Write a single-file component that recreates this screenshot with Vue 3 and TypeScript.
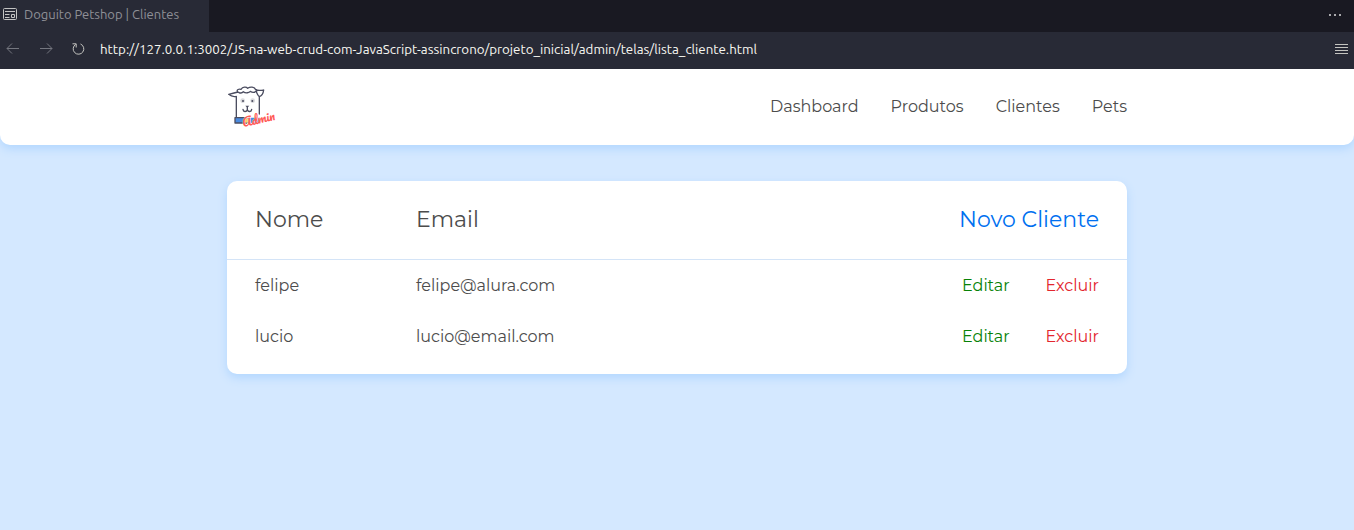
<script setup lang="ts">
import { ref } from 'vue'

interface Cliente {
  nome: string
  email: string
}

const endereco = ref(
  'http://127.0.0.1:3002/JS-na-web-crud-com-JavaScript-assincrono/projeto_inicial/admin/telas/lista_cliente.html'
)
const menu: string[] = ['Dashboard', 'Produtos', 'Clientes', 'Pets']
const clientes = ref<Cliente[]>([
  { nome: 'felipe', email: 'felipe@alura.com' },
  { nome: 'lucio', email: 'lucio@email.com' }
])

function excluir(cliente: Cliente): void {
  clientes.value = clientes.value.filter((c) => c !== cliente)
}
</script>

<template>
  <div class="window">
    <div class="tabs">
      <div class="tab">
        <svg class="tab-icon" viewBox="0 0 14 12" width="14" height="12" aria-hidden="true">
          <rect x="0.5" y="0.5" width="13" height="11" rx="1" />
          <path d="M2 3.5h10M2 6.5h4.500M2 9.500h4.500M8.500 6.500h3v3h-3z" />
        </svg>
        <span>Doguito Petshop | Clientes</span>
      </div>
      <button class="icon-button more" type="button" aria-label="Mais ações">
        <svg viewBox="0 0 12 2" width="12" height="2"><path d="M0 0h2v2H0zM5 0h2v2H5zM10 0h2v2h-2z" /></svg>
      </button>
    </div>
    <div class="toolbar">
      <button class="icon-button dim" type="button" aria-label="Voltar">
        <svg viewBox="0 0 14 12" width="14" height="12"><path d="M13 5.500H1M6 0.500L1 5.500l5 5" /></svg>
      </button>
      <button class="icon-button dim" type="button" aria-label="Avançar">
        <svg viewBox="0 0 14 12" width="14" height="12"><path d="M1 5.500h12M8 0.500l5 5-5 5" /></svg>
      </button>
      <button class="icon-button" type="button" aria-label="Recarregar">
        <svg viewBox="0 0 14 12" width="14" height="12"><path d="M0.500 0.800h3.700v3.700M3.700 1.400A5.300 5.300 0 1 0 8.500 1" /></svg>
      </button>
      <input v-model="endereco" class="address" type="text" aria-label="Endereço" spellcheck="false" />
      <button class="icon-button" type="button" aria-label="Menu">
        <svg viewBox="0 0 13 10" width="13" height="10"><path d="M0 0.500h13M0 3.500h13M0 6.500h13M0 9.500h13" /></svg>
      </button>
    </div>

    <div class="page">
      <header class="header">
        <div class="container header-inner">
          <a class="logo" href="#" aria-label="Doguito Admin">
            <svg viewBox="21 21 150 132" width="50" height="44">
              <path class="collar" d="M45 119h74v16H45z" />
              <path class="face" d="M49 56L50 118h68V48L108 36H58L49 43z" />
              <path
                class="line"
                d="M49 55v63M118 56v52M54 42C44 45 35 47 26 49C32 54 40 57 49 55M52 41C50 35 56 32 63 34C68 26 79 26 83 31C91 25 103 27 106 34C111 34 113 38 109 41M56 43C61 46 67 45 70 41C77 47 88 44 91 40C97 44 104 43 108 40M108 36C116 38 123 37 131 36C130 45 126 53 118 56C113 52 111 46 109 41M45 119h34M45 119v16h35"
              />
              <path class="tag" d="M72 121h14v13H72z" />
              <circle class="eye" cx="68" cy="68" r="7" />
              <circle class="eye" cx="98" cy="68" r="7" />
              <circle class="dark" cx="69" cy="69" r="3" />
              <circle class="dark" cx="97" cy="69" r="3" />
              <path class="dark" d="M76 83h12l-6 6z" />
              <path class="line" d="M82 88v7M69 94C70 102 79 103 82 95C85 103 94 102 95 94" />
              <text class="admin" x="70" y="148" transform="rotate(-13 70 148)">Admin</text>
            </svg>
          </a>
          <nav class="menu">
            <a v-for="item in menu" :key="item" href="#">{{ item }}</a>
          </nav>
        </div>
      </header>

      <main class="container">
        <section class="card">
          <table>
            <colgroup>
              <col class="col-nome" />
              <col />
              <col class="col-acoes" />
            </colgroup>
            <thead>
              <tr>
                <th scope="col">Nome</th>
                <th scope="col">Email</th>
                <th scope="col" class="right"><a class="novo" href="#">Novo Cliente</a></th>
              </tr>
            </thead>
            <tbody>
              <tr v-for="cliente in clientes" :key="cliente.email">
                <td>{{ cliente.nome }}</td>
                <td>{{ cliente.email }}</td>
                <td>
                  <div class="acoes">
                    <a class="editar" href="#">Editar</a>
                    <button class="excluir" type="button" @click="excluir(cliente)">Excluir</button>
                  </div>
                </td>
              </tr>
            </tbody>
          </table>
        </section>
      </main>
    </div>
  </div>
</template>

<style>
body {
  margin: 0;
  background: #d4e8ff;
}
</style>

<style scoped>
.window {
  display: flex;
  flex-direction: column;
  min-height: 100vh;
}

.tabs {
  display: flex;
  justify-content: space-between;
  height: 32px;
  background: #191922;
}

.tab {
  display: flex;
  align-items: center;
  gap: 7px;
  box-sizing: border-box;
  padding: 0 30px 4px 3px;
  background: #282a36;
  color: #8f9096;
  font: 13px/18px Ubuntu, "Noto Sans", sans-serif;
}

.tab-icon {
  fill: none;
  stroke: #c4c4c4;
}

.icon-button {
  display: flex;
  align-items: center;
  padding: 0;
  border: 0;
  background: none;
  cursor: pointer;
}

.icon-button svg {
  fill: none;
  stroke: #c4c4c0;
}

.icon-button.dim svg {
  stroke: #74767f;
}

.icon-button.more {
  padding: 0 13px 2px 0;
}

.icon-button.more svg {
  fill: #a9a9ad;
  stroke: none;
}

.toolbar {
  display: flex;
  align-items: center;
  gap: 19px;
  box-sizing: border-box;
  height: 37px;
  padding: 0 6px 3px;
  background: #282a36;
}

.address {
  flex: 1;
  min-width: 0;
  margin-left: -5px;
  padding: 0;
  border: 0;
  outline: 0;
  background: none;
  color: #f8f8f2;
  font-family: Ubuntu, "Noto Sans", sans-serif;
}

.page {
  flex: 1;
  overflow: hidden;
  background: #d4e8ff;
  color: #4c4c4c;
  font: 400 16px/20px Montserrat, Inter, sans-serif;
}

.container {
  width: 100%;
  max-width: 900px;
  margin: 0 auto;
}

.header {
  margin-bottom: 36px;
  padding: 16px 0;
  border-radius: 0 0 10px 10px;
  background: #fff;
  box-shadow: 0 4px 10px #b3d7ff;
}

.header-inner {
  display: flex;
  align-items: center;
  justify-content: space-between;
}

.logo,
.logo svg {
  display: block;
}

.logo svg {
  overflow: visible;
}

.face {
  fill: #fff;
}

.line {
  fill: none;
  stroke: #4b4d60;
  stroke-width: 4;
  stroke-linecap: round;
  stroke-linejoin: round;
}

.dark {
  fill: #4b4d60;
}

.eye {
  fill: #d9d9dc;
}

.collar {
  fill: #4a8be0;
}

.tag {
  fill: #f5cf68;
}

.admin {
  fill: #ff5a55;
  stroke: #fff;
  stroke-width: 2;
  paint-order: stroke;
  font: 400 36px Pacifico, Lobster, "Liberation Serif", serif;
}

.menu {
  display: flex;
  gap: 32px;
}

a {
  color: inherit;
  text-decoration: none;
}

.card {
  padding-bottom: 12px;
  border-radius: 10px;
  background: #fff;
  box-shadow: 0 4px 10px #b3d7ff;
}

table {
  width: 100%;
  border-collapse: collapse;
  table-layout: fixed;
}

.col-nome {
  width: 161px;
}

.col-acoes {
  width: 240px;
}

th,
td {
  padding: 0 28px;
  text-align: left;
}

th:nth-child(2),
td:nth-child(2) {
  padding-right: 0;
}

th {
  height: 78px;
  border-bottom: 1px solid #d4e4f7;
  font-size: 22px;
  font-weight: 400;
  line-height: 28px;
}

th.right {
  text-align: right;
}

td {
  height: 51px;
}

.novo {
  color: #0070f0;
}

.acoes {
  display: flex;
  justify-content: flex-end;
  gap: 36px;
}

.editar {
  color: #078207;
}

.excluir {
  padding: 0;
  border: 0;
  background: none;
  color: #e3262e;
  font: inherit;
  cursor: pointer;
}
</style>
